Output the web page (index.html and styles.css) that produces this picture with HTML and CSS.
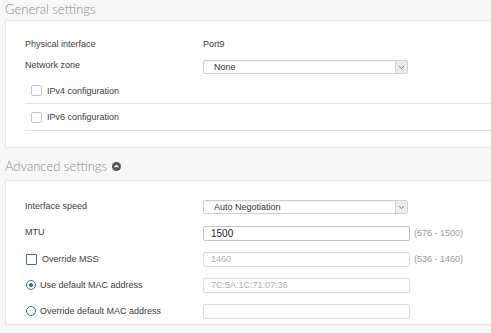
FILE: index.html
```html
<!DOCTYPE html>
<html lang="en">
<head>
  <meta charset="UTF-8">
  <meta name="viewport" content="width=device-width, initial-scale=1.0">
  <title>Interface settings</title>
  <link rel="stylesheet" href="styles.css">
</head>
<body>
  <div class="page">
    <h2 class="section-title">General settings</h2>
    <div class="card card-general">
      <div class="row row-static">
        <span class="label">Physical interface</span>
        <span class="value">Port9</span>
      </div>
      <div class="row row-zone">
        <span class="label">Network zone</span>
        <div class="select">
          <span class="select-text">None</span>
          <span class="select-arrow">
            <svg width="7" height="5" viewBox="0 0 7 5"><path d="M1 1.2 L3.5 3.6 L6 1.2" fill="none" stroke="#777" stroke-width="1"/></svg>
          </span>
        </div>
      </div>
      <div class="row row-check">
        <span class="checkbox"></span>
        <span class="check-label">IPv4 configuration</span>
      </div>
      <div class="row row-check row-check-last">
        <span class="checkbox"></span>
        <span class="check-label">IPv6 configuration</span>
      </div>
    </div>

    <h2 class="section-title section-advanced">
      Advanced settings
      <svg class="toggle-icon" width="9" height="9" viewBox="0 0 10 10"><circle cx="5" cy="5" r="5" fill="#555"/><path d="M2.8 6 L5 3.8 L7.2 6" fill="none" stroke="#fff" stroke-width="1.4"/></svg>
    </h2>
    <div class="card card-advanced">
      <div class="row">
        <span class="label">Interface speed</span>
        <div class="select">
          <span class="select-text">Auto Negotiation</span>
          <span class="select-arrow">
            <svg width="7" height="5" viewBox="0 0 7 5"><path d="M1 1.2 L3.5 3.6 L6 1.2" fill="none" stroke="#777" stroke-width="1"/></svg>
          </span>
        </div>
      </div>
      <div class="row">
        <span class="label">MTU</span>
        <div class="input input-active">1500</div>
        <span class="hint">(576 - 1500)</span>
      </div>
      <div class="row">
        <span class="label label-option">
          <span class="checkbox checkbox-blue"></span>
          Override MSS
        </span>
        <div class="input input-disabled">1460</div>
        <span class="hint">(536 - 1460)</span>
      </div>
      <div class="row">
        <span class="label label-option">
          <span class="radio radio-on"></span>
          Use default MAC address
        </span>
        <div class="input input-disabled">7C:5A:1C:71:07:36</div>
      </div>
      <div class="row">
        <span class="label label-option">
          <span class="radio"></span>
          Override default MAC address
        </span>
        <div class="input"></div>
      </div>
    </div>
  </div>
</body>
</html>
```

FILE: styles.css
```css
body {
  margin: 0;
  padding: 0;
  background-color: #f7f7f7;
  font-family: 'Liberation Sans', Arial, sans-serif;
  font-size: 9px;
  color: #3c3c3c;
  overflow: hidden;
}

.page {
  width: 491px;
  height: 333px;
}

.section-title {
  margin: 0 0 2px 0;
  padding-left: 5px;
  height: 18px;
  line-height: 18px;
  font-family: 'Lato', sans-serif;
  font-weight: 300;
  font-size: 13px;
  color: #8a8a8a;
  display: flex;
  align-items: center;
}

.section-advanced {
  margin-top: 9px;
  margin-bottom: 5px;
}

.toggle-icon {
  margin-left: 5px;
}

.card {
  margin-left: 5px;
  background-color: #ffffff;
  border: 1px solid #e4e4e4;
  border-right: none;
  padding: 13px 0 0 19px;
}

.card-general {
  padding-bottom: 16px;
}

/* rows */
.row {
  display: flex;
  align-items: center;
  height: 26px;
}

.row-static {
  height: 22px;
}

.row-zone {
  height: 22px;
}

.label {
  width: 178px;
  flex-shrink: 0;
  padding-bottom: 2px;
}

.label-option {
  display: flex;
  align-items: center;
  padding-bottom: 0;
}

.value {
  padding-bottom: 2px;
}

.row-zone .label {
  padding-bottom: 5px;
}

.row-check {
  height: 26px;
  box-sizing: border-box;
  border-bottom: 1px solid #e2e2e2;
  padding-left: 6px;
}

.row-check-last {
  height: 27px;
}

.check-label {
  margin-left: 5px;
}

.checkbox {
  width: 9px;
  height: 9px;
  border: 1px solid #c4c4c4;
  border-radius: 2px;
  background: #fff;
  display: inline-block;
}

.checkbox-blue {
  border: 1.5px solid #3b6f92;
  border-radius: 1px;
  margin: 0 5px 0 1px;
}

.radio {
  width: 8px;
  height: 8px;
  border: 1.5px solid #2f6f96;
  border-radius: 50%;
  margin: 0 4px 0 1px;
  display: inline-block;
  position: relative;
}

.radio-on::after {
  content: '';
  position: absolute;
  left: 2px;
  top: 2px;
  width: 4px;
  height: 4px;
  border-radius: 50%;
  background: #2f6f96;
}

/* controls */
.select {
  width: 205px;
  height: 14px;
  box-sizing: border-box;
  border: 1px solid #cfcfcf;
  border-radius: 2px;
  display: flex;
  align-items: center;
  background: #fff;
  box-shadow: inset 0 1px 1px rgba(0, 0, 0, 0.06);
}

.select-text {
  flex: 1;
  padding-left: 10px;
  color: #333;
}

.select-arrow {
  width: 11px;
  height: 12px;
  border-left: 1px solid #cfcfcf;
  background: #ececec;
  display: flex;
  align-items: center;
  justify-content: center;
}

.input {
  width: 207px;
  height: 15px;
  box-sizing: border-box;
  border: 1px solid #dcdcdc;
  border-radius: 2px;
  padding-left: 7px;
  line-height: 13px;
  background: #fff;
}

.input-active {
  border-color: #c2c2c2;
  color: #222;
  font-size: 10px;
}

.input-disabled {
  color: #b0b0b0;
}

.hint {
  margin-left: 4px;
  color: #9a9a9a;
}
```
